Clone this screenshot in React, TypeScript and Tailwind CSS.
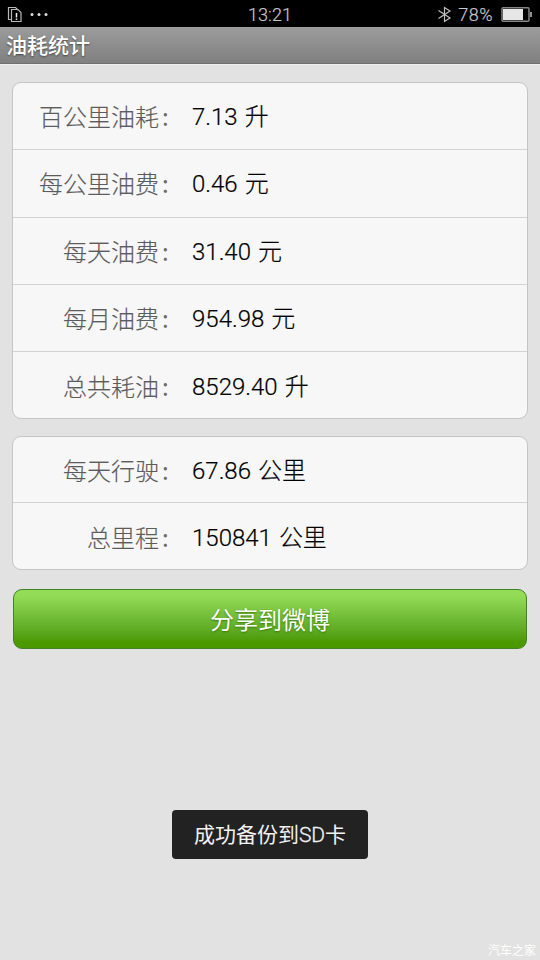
const fuelRows = [
  ["百公里油耗", "7.13", "升"],
  ["每公里油费", "0.46", "元"],
  ["每天油费", "31.40", "元"],
  ["每月油费", "954.98", "元"],
  ["总共耗油", "8529.40", "升"],
];

const distanceRows = [
  ["每天行驶", "67.86", "公里"],
  ["总里程", "150841", "公里"],
];

function StatusBar() {
  return (
    <div className="grid h-[27px] shrink-0 grid-cols-3 items-center bg-black font-['Roboto','Noto_Sans_CJK_SC',sans-serif] text-[#c8c8c8]">
      <div className="flex items-center pl-[7px]">
        <svg width="42" height="17" viewBox="0 0 42 17" fill="none" stroke="#b8b8b8" strokeWidth="1.200">
          <path d="M4.500 13.500h-3v-12h7l2.500 2.500" />
          <path d="M4.500 3.500h6.500l3 3v9h-9.500z" />
          <path d="M9.500 7v4.500M9.500 12.500v1.500" stroke="#eee" strokeWidth="1.500" />
          <g fill="#dedede" stroke="none">
            <circle cx="25" cy="8.500" r="1.500" />
            <circle cx="32" cy="8.500" r="1.500" />
            <circle cx="39" cy="8.500" r="1.500" />
          </g>
        </svg>
      </div>
      <div className="pt-px text-center text-[18px] font-light tracking-[0.1px] [-webkit-text-stroke:0.2px_#c8c8c8]">13:21</div>
      <div className="flex items-center justify-end pr-2">
        <svg width="14" height="17" viewBox="0 0 14 17" fill="none" stroke="#c0c0c0" strokeWidth="1.200">
          <path d="M0.500 4.500l11.500 7.500L6.500 15.500V1.500l5.500 3.500L0.500 12.500" />
        </svg>
        <span className="ml-[6px] mr-2 pt-px text-[18px] font-light tracking-[0.5px] [-webkit-text-stroke:0.2px_#c8c8c8]">78%</span>
        <svg width="31" height="15" viewBox="0 0 31 15">
          <rect x="1" y="0.750" width="27" height="13.500" rx="1" fill="none" stroke="#858585" strokeWidth="1.500" />
          <rect x="2" y="2" width="20" height="11" fill="#e6e6e6" />
          <path d="M29 5h2v5h-2z" fill="#909090" />
        </svg>
      </div>
    </div>
  );
}

function StatCard({ rows, rowClass }: { rows: string[][]; rowClass: string }) {
  return (
    <div className="divide-y divide-[#d2d2d2] overflow-hidden rounded-[9px] border border-[#c5c5c5] bg-[#f7f7f7]">
      {rows.map(([label, amount, unit]) => (
        <div className={`flex items-center text-[24px] last:pt-[2px] ${rowClass}`} key={label}>
          <div className="flex w-[146px] justify-end font-light text-[#5c5c5c] [-webkit-text-stroke:0.15px_#5c5c5c]">{label}</div>
          <div className="w-[33px] pl-[3px] text-[#6a6a6a]">:</div>
          <div className="flex items-baseline gap-[7px] text-black">
            <span className="font-['Roboto',sans-serif] font-light [-webkit-text-stroke:0.2px_black]">{amount}</span>
            <span className="font-light [-webkit-text-stroke:0.2px_black]">{unit}</span>
          </div>
        </div>
      ))}
    </div>
  );
}

export default function App() {
  return (
    <div className="relative flex h-[960px] w-[540px] flex-col overflow-hidden bg-[#e2e2e2] font-['Noto_Sans_CJK_SC',sans-serif]">
      <StatusBar />
      <header className="flex h-[37px] shrink-0 items-center border-b border-b-[#707070] bg-linear-to-b from-[#9c9c9c] to-[#808080] pl-1.5 text-[21px] font-medium text-white shadow-[0_1px_0_#eee] [text-shadow:0_1px_2px_#444]">
        油耗统计
      </header>

      <main className="flex flex-col px-3 pt-[18px]">
        <StatCard rows={fuelRows} rowClass="h-[67.25px] last:h-[66px]" />
        <div className="mt-[17px]">
          <StatCard rows={distanceRows} rowClass="h-[66.25px] last:h-[65.75px]" />
        </div>
        <button className="mx-px mt-[19px] h-[60px] rounded-[9px] border border-[#438326] bg-linear-to-b from-[#93dc57] from-10% to-[#4b9900] to-90% text-[24px] text-white [text-shadow:0_1px_2px_#3a7a0a]">
          分享到微博
        </button>
      </main>

      <div className="absolute left-[172px] top-[810px] flex h-[49px] w-[196px] items-center justify-center rounded bg-[#222] text-[21px] text-[#f2f2f2]">
        <p>
          成功备份到<span className="font-['Roboto',sans-serif] font-light [-webkit-text-stroke:0.3px_#f2f2f2]">SD</span>卡
        </p>
      </div>
      <div className="absolute bottom-0 right-1 text-[12px] leading-5 text-white">汽车之家</div>
    </div>
  );
}
